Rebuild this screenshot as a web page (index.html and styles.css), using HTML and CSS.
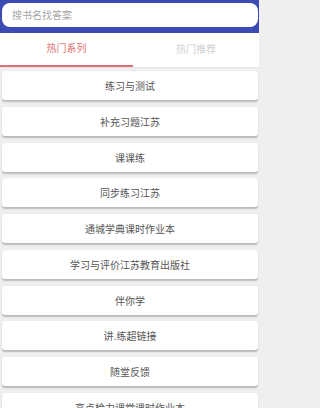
FILE: index.html
```html
<!DOCTYPE html>
<html lang="zh">
<head>
<meta charset="utf-8">
<link rel="stylesheet" href="styles.css">
</head>
<body>
<header class="header">
  <div class="search">搜书名找答案</div>
</header>
<nav class="tabs">
  <div class="tab active">热门系列</div>
  <div class="tab">热门推荐</div>
</nav>
<main class="list">
  <div class="card">练习与测试</div>
  <div class="card">补充习题江苏</div>
  <div class="card">课课练</div>
  <div class="card">同步练习江苏</div>
  <div class="card">通城学典课时作业本</div>
  <div class="card">学习与评价江苏教育出版社</div>
  <div class="card">伴你学</div>
  <div class="card">讲.练超链接</div>
  <div class="card">随堂反馈</div>
  <div class="card">高点检力课堂课时作业本</div>
</main>
</body>
</html>
```
FILE: styles.css
```css
html, body {
  margin: 0;
  padding: 0;
}
body {
  width: 259px;
  height: 408px;
  overflow: hidden;
  background: #efefef;
  font-family: "Noto Sans CJK SC", "Noto Sans", sans-serif;
  font-size: 10px;
}
.header {
  background: #3b4bb2;
  height: 33px;
  padding: 3px 1px 0 2px;
  box-sizing: border-box;
}
.search {
  background: #fff;
  height: 24px;
  border-radius: 8px;
  box-sizing: border-box;
  padding-left: 10px;
  line-height: 24px;
  color: #a6a6a6;
}
.tabs {
  display: flex;
  background: #fff;
  height: 35px;
  border-bottom: 1px solid #e4e4e4;
  box-sizing: border-box;
}
.tab {
  flex: 1;
  display: flex;
  align-items: center;
  justify-content: center;
  color: #d2d2d2;
  box-sizing: border-box;
  padding-bottom: 3px;
}
.tab.active {
  flex: 0 0 133px;
  color: #e07575;
  border-bottom: 2px solid #df7070;
}
.list {
  padding: 3px 1px 0 2px;
}
.card {
  background: #fff;
  height: 29px;
  margin-bottom: 6.75px;
  border-radius: 3px;
  box-shadow: 0 1.5px 1.5px rgba(0,0,0,0.22);
  display: flex;
  align-items: center;
  justify-content: center;
  color: #555;
}
```
